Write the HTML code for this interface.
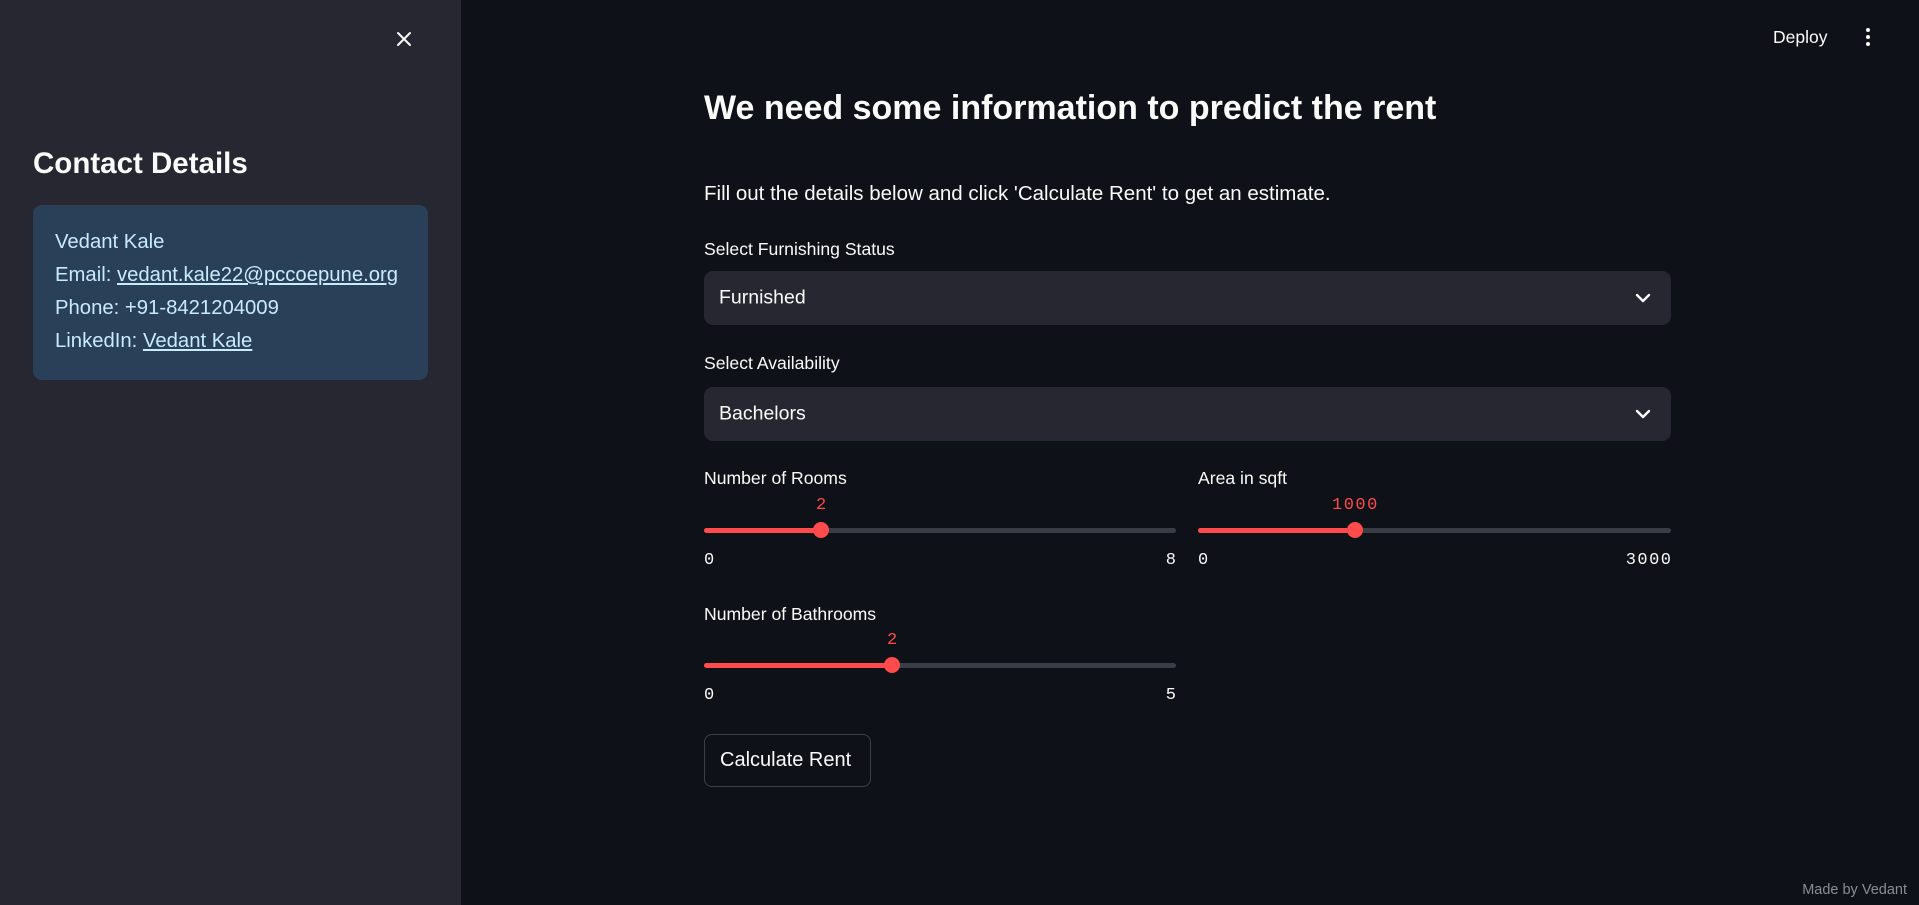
<!DOCTYPE html>
<html><head><meta charset="utf-8"><style>
*{margin:0;padding:0;box-sizing:border-box}
body{width:1919px;height:905px;overflow:hidden;background:#0e1117;font-family:"Liberation Sans",sans-serif;color:#fafafa;position:relative}
.sb{position:absolute;left:0;top:0;width:461px;height:905px;background:#262730}
.abs{position:absolute;white-space:nowrap}
.box{position:absolute;left:33px;top:205px;width:395px;height:175px;background:#2a3f58;border-radius:9px}
.box div{position:absolute;left:22px;font-size:20.3px;color:#c7ebff}
.box a{color:#c7ebff;text-decoration:underline}
.lbl{font-size:17.6px;color:#fafafa}
.sel{position:absolute;left:704px;width:967px;background:#262730;border-radius:9px}
.sel span{position:absolute;left:15px;font-size:19.5px;top:50%;transform:translateY(-50%)}
.sel svg{position:absolute;right:20px;top:50%;transform:translateY(-50%)}
.track{position:absolute;height:5px;background:#3b3d46;border-radius:3px}
.fill{position:absolute;left:0;top:0;height:5px;background:#ff4b4b;border-radius:3px}
.thumb{position:absolute;top:-6px;width:16px;height:16px;border-radius:50%;background:#ff4b4b;margin-left:-8px}
.mono{font-family:"Liberation Mono",monospace;font-size:17px;letter-spacing:1.5px}
.val{color:#ff4b4b}
</style></head><body>
<div class="sb">
  <svg class="abs" style="left:396px;top:31px" width="16" height="16" viewBox="0 0 16 16"><path d="M2 2L14 14M14 2L2 14" stroke="#fafafa" stroke-width="2" stroke-linecap="round"/></svg>
  <div class="abs" style="left:33px;top:147px;font-size:29.5px;font-weight:bold">Contact Details</div>
  <div class="box">
    <div style="top:26px">Vedant Kale</div>
    <div style="top:59px">Email: <a>vedant.kale22@pccoepune.org</a></div>
    <div style="top:92px">Phone: +91-8421204009</div>
    <div style="top:125px">LinkedIn: <a>Vedant Kale</a></div>
  </div>
</div>
<div class="abs" style="left:1773px;top:27px;font-size:17.5px">Deploy</div>
<svg class="abs" style="left:1864px;top:27px" width="8" height="20" viewBox="0 0 8 20"><circle cx="4" cy="3" r="2" fill="#fafafa"/><circle cx="4" cy="10" r="2" fill="#fafafa"/><circle cx="4" cy="17" r="2" fill="#fafafa"/></svg>

<div class="abs" style="left:704px;top:89px;font-size:34px;font-weight:bold">We need some information to predict the rent</div>
<div class="abs" style="left:704px;top:182px;font-size:20.5px">Fill out the details below and click 'Calculate Rent' to get an estimate.</div>

<div class="abs lbl" style="left:704px;top:239px">Select Furnishing Status</div>
<div class="sel" style="top:271px;height:54px"><span>Furnished</span><svg width="16" height="10" viewBox="0 0 16 10"><path d="M2 2L8 8L14 2" stroke="#fafafa" stroke-width="2.4" fill="none" stroke-linecap="round" stroke-linejoin="round"/></svg></div>

<div class="abs lbl" style="left:704px;top:353px">Select Availability</div>
<div class="sel" style="top:387px;height:54px"><span>Bachelors</span><svg width="16" height="10" viewBox="0 0 16 10"><path d="M2 2L8 8L14 2" stroke="#fafafa" stroke-width="2.4" fill="none" stroke-linecap="round" stroke-linejoin="round"/></svg></div>

<div class="abs lbl" style="left:704px;top:468px">Number of Rooms</div>
<div class="abs mono val" style="left:816px;top:496px">2</div>
<div class="track" style="left:704px;top:528px;width:472px"><div class="fill" style="width:117px"></div><div class="thumb" style="left:117px"></div></div>
<div class="abs mono" style="left:704px;top:551px">0</div>
<div class="abs mono" style="right:743px;top:551px;letter-spacing:0">8</div>

<div class="abs lbl" style="left:1198px;top:468px">Area in sqft</div>
<div class="abs mono val" style="left:1332px;top:496px">1000</div>
<div class="track" style="left:1198px;top:528px;width:473px"><div class="fill" style="width:157px"></div><div class="thumb" style="left:157px"></div></div>
<div class="abs mono" style="left:1198px;top:551px">0</div>
<div class="abs mono" style="right:248px;top:551px;letter-spacing:1.5px">300<span style="letter-spacing:0">0</span></div>

<div class="abs lbl" style="left:704px;top:604px">Number of Bathrooms</div>
<div class="abs mono val" style="left:887px;top:631px">2</div>
<div class="track" style="left:704px;top:663px;width:472px"><div class="fill" style="width:188px"></div><div class="thumb" style="left:188px"></div></div>
<div class="abs mono" style="left:704px;top:686px">0</div>
<div class="abs mono" style="right:743px;top:686px;letter-spacing:0">5</div>

<div class="abs" style="left:704px;top:734px;width:167px;height:53px;border:1px solid rgba(250,250,250,0.2);border-radius:8px;background:#0e1117"></div>
<div class="abs" style="left:720px;top:749px;font-size:20px">Calculate Rent</div>

<div class="abs" style="right:12px;top:882px;font-size:14.5px;color:#8b8d94">Made by Vedant</div>
</body></html>
